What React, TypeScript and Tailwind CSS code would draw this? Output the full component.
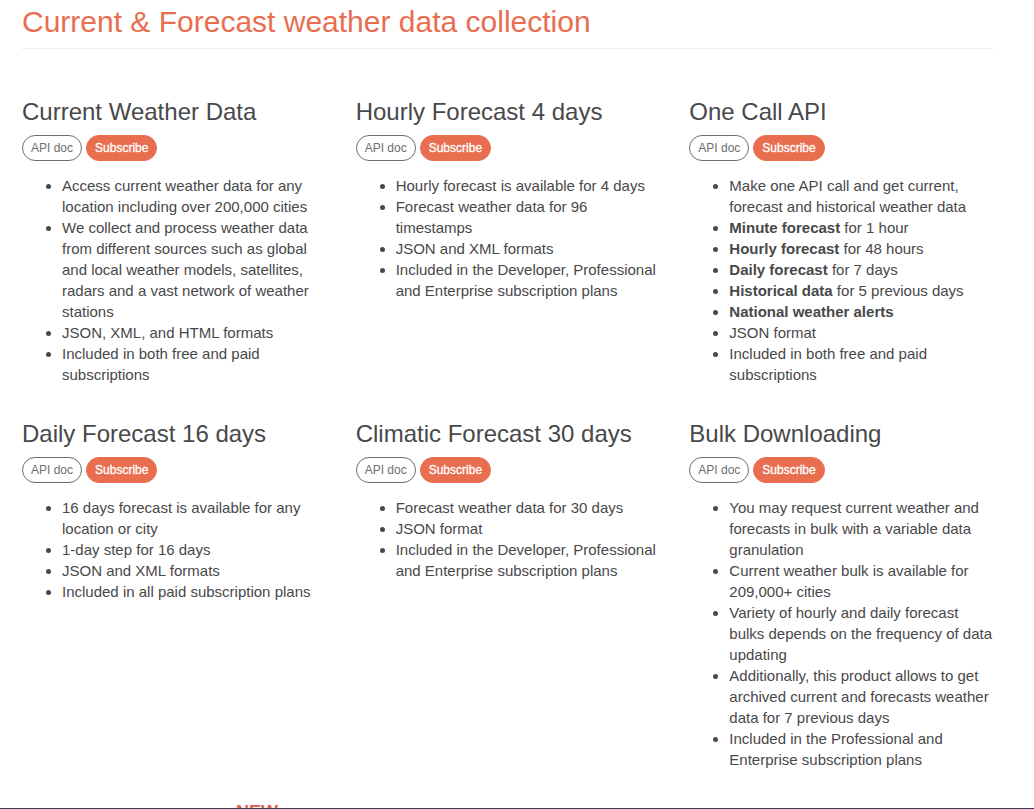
import type { ReactNode } from "react";

type Product = {
  title: string;
  features: ReactNode[];
};

const products: Product[] = [
  {
    title: "Current Weather Data",
    features: [
      "Access current weather data for any location including over 200,000 cities",
      "We collect and process weather data from different sources such as global and local weather models, satellites, radars and a vast network of weather stations",
      "JSON, XML, and HTML formats",
      "Included in both free and paid subscriptions",
    ],
  },
  {
    title: "Hourly Forecast 4 days",
    features: [
      "Hourly forecast is available for 4 days",
      "Forecast weather data for 96 timestamps",
      "JSON and XML formats",
      "Included in the Developer, Professional and Enterprise subscription plans",
    ],
  },
  {
    title: "One Call API",
    features: [
      "Make one API call and get current, forecast and historical weather data",
      <><b>Minute forecast</b> for 1 hour</>,
      <><b>Hourly forecast</b> for 48 hours</>,
      <><b>Daily forecast</b> for 7 days</>,
      <><b>Historical data</b> for 5 previous days</>,
      <b>National weather alerts</b>,
      "JSON format",
      "Included in both free and paid subscriptions",
    ],
  },
  {
    title: "Daily Forecast 16 days",
    features: [
      "16 days forecast is available for any location or city",
      "1-day step for 16 days",
      "JSON and XML formats",
      "Included in all paid subscription plans",
    ],
  },
  {
    title: "Climatic Forecast 30 days",
    features: [
      "Forecast weather data for 30 days",
      "JSON format",
      "Included in the Developer, Professional and Enterprise subscription plans",
    ],
  },
  {
    title: "Bulk Downloading",
    features: [
      "You may request current weather and forecasts in bulk with a variable data granulation",
      "Current weather bulk is available for 209,000+ cities",
      "Variety of hourly and daily forecast bulks depends on the frequency of data updating",
      "Additionally, this product allows to get archived current and forecasts weather data for 7 previous days",
      "Included in the Professional and Enterprise subscription plans",
    ],
  },
];

function ProductCard({ title, features }: Product) {
  return (
    <section>
      <h3 className="text-2xl leading-[26px]">{title}</h3>
      <div className="mt-[10px] flex gap-1">
        <a
          href="#doc"
          className="rounded-full border border-[#6e6e70] px-2 text-xs leading-6 text-[#6e6e70]"
        >
          API doc
        </a>
        <a
          href="#subscribe"
          className="rounded-full border border-[#e96e50] bg-[#e96e50] px-2 text-xs leading-6 text-white [-webkit-text-stroke:0.3px_white]"
        >
          Subscribe
        </a>
      </div>
      <ul className="mt-[14px] list-disc pl-10 text-[15px] leading-[21px]">
        {features.map((feature, index) => (
          <li key={index}>{feature}</li>
        ))}
      </ul>
    </section>
  );
}

export default function App() {
  return (
    <div className="flex min-h-screen flex-col bg-white font-['Liberation_Sans',Arial,sans-serif] text-[#48484a]">
      <main className="pt-[5px] pr-[41px] pl-[22px]">
        <h2 className="border-b border-[#eeeeee] pb-[10px] text-3xl leading-[33px] text-[#e96e50]">
          Current &amp; Forecast weather data collection
        </h2>
        <div className="mt-[50px] grid grid-cols-3 gap-x-[30px] gap-y-9">
          {products.map((product) => (
            <ProductCard key={product.title} {...product} />
          ))}
        </div>
      </main>
      <div className="mt-auto h-[7px] overflow-hidden border-b border-[#3b3a5c] pl-[236px]">
        <span className="block text-lg leading-5 font-bold text-[#e25f50]">NEW</span>
      </div>
    </div>
  );
}
